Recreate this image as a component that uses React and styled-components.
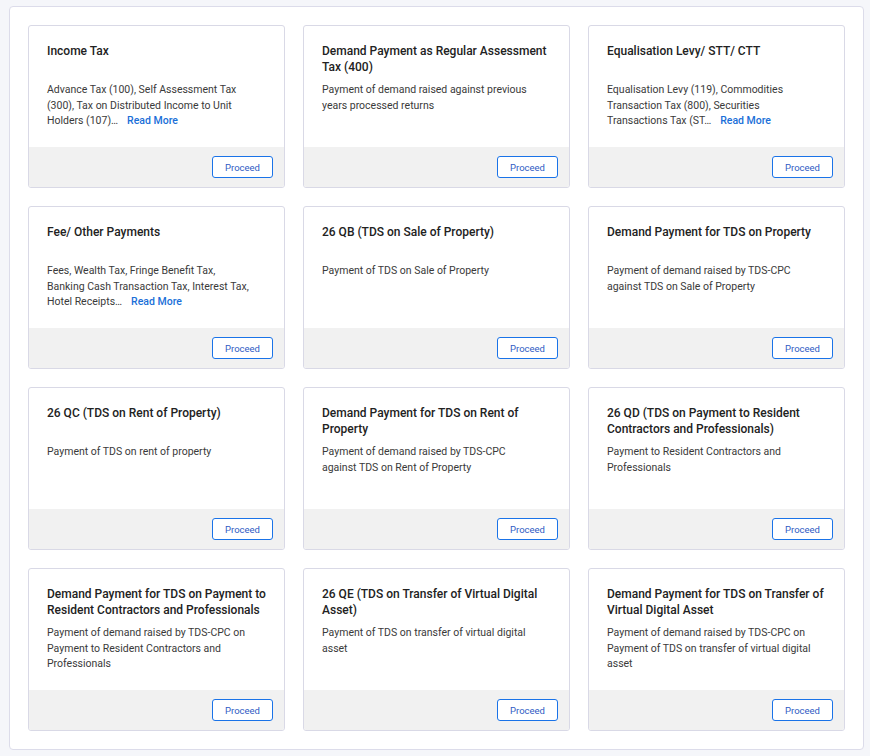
import styled, { createGlobalStyle } from "styled-components";

const GlobalStyle = createGlobalStyle`
  body {
    margin: 0;
    background: #f5f6fa;
    font-family: Roboto, "Liberation Sans", Arial, sans-serif;
  }
`;

const Page = styled.div`
  padding: 6px 6px 6px 9px;
`;

const Panel = styled.section`
  background: #ffffff;
  border: 1px solid #dcdcea;
  border-radius: 4px;
  padding: 18px;
  display: grid;
  grid-template-columns: 257fr 267fr 257fr;
  grid-auto-rows: 163px;
  gap: 18px;
`;

const Card = styled.div`
  display: flex;
  flex-direction: column;
  border: 1px solid #d9d9e6;
  border-radius: 3px;
  background: #ffffff;
  overflow: hidden;
`;

const Body = styled.div`
  flex: 1;
  padding: 17px 18px 0;
`;

const Title = styled.h3`
  margin: 0 0 7px;
  min-height: 32px;
  font-size: 12px;
  font-weight: 500;
  line-height: 16px;
  color: #222222;
`;

const Desc = styled.p`
  margin: 0;
  padding-right: 14px;
  font-size: 10.5px;
  line-height: 15.5px;
  color: #3a3a3a;
`;

const ReadMore = styled.a`
  margin-left: 9px;
  color: #1a6fd8;
  font-weight: 500;
  text-decoration: none;
  cursor: pointer;
`;

const Footer = styled.div`
  height: 40px;
  background: #f1f1f1;
  display: flex;
  align-items: center;
  justify-content: flex-end;
  padding-right: 11px;
`;

const Button = styled.button`
  width: 61px;
  height: 22px;
  padding: 0;
  background: #ffffff;
  border: 1px solid #1a73e8;
  border-radius: 3px;
  font-family: inherit;
  font-size: 9.5px;
  color: #2f5bc4;
  cursor: pointer;
`;

const items = [
  {
    title: "Income Tax",
    desc: "Advance Tax (100), Self Assessment Tax (300), Tax on Distributed Income to Unit Holders (107)…",
    more: true,
  },
  {
    title: "Demand Payment as Regular Assessment Tax (400)",
    desc: "Payment of demand raised against previous years processed returns",
  },
  {
    title: "Equalisation Levy/ STT/ CTT",
    desc: "Equalisation Levy (119), Commodities Transaction Tax (800), Securities Transactions Tax (ST…",
    more: true,
  },
  {
    title: "Fee/ Other Payments",
    desc: "Fees, Wealth Tax, Fringe Benefit Tax, Banking Cash Transaction Tax, Interest Tax, Hotel Receipts…",
    more: true,
  },
  {
    title: "26 QB (TDS on Sale of Property)",
    desc: "Payment of TDS on Sale of Property",
  },
  {
    title: "Demand Payment for TDS on Property",
    desc: "Payment of demand raised by TDS-CPC against TDS on Sale of Property",
  },
  {
    title: "26 QC (TDS on Rent of Property)",
    desc: "Payment of TDS on rent of property",
  },
  {
    title: "Demand Payment for TDS on Rent of Property",
    desc: "Payment of demand raised by TDS-CPC against TDS on Rent of Property",
  },
  {
    title: "26 QD (TDS on Payment to Resident Contractors and Professionals)",
    desc: "Payment to Resident Contractors and Professionals",
  },
  {
    title: "Demand Payment for TDS on Payment to Resident Contractors and Professionals",
    desc: "Payment of demand raised by TDS-CPC on Payment to Resident Contractors and Professionals",
  },
  {
    title: "26 QE (TDS on Transfer of Virtual Digital Asset)",
    desc: "Payment of TDS on transfer of virtual digital asset",
  },
  {
    title: "Demand Payment for TDS on Transfer of Virtual Digital Asset",
    desc: "Payment of demand raised by TDS-CPC on Payment of TDS on transfer of virtual digital asset",
  },
];

const App = () => {
  return (
    <Page>
      <GlobalStyle />
      <Panel>
        {items.map((item) => (
          <Card key={item.title}>
            <Body>
              <Title>{item.title}</Title>
              <Desc>
                {item.desc}
                {item.more && <ReadMore>Read More</ReadMore>}
              </Desc>
            </Body>
            <Footer>
              <Button>Proceed</Button>
            </Footer>
          </Card>
        ))}
      </Panel>
    </Page>
  );
};

export default App;
